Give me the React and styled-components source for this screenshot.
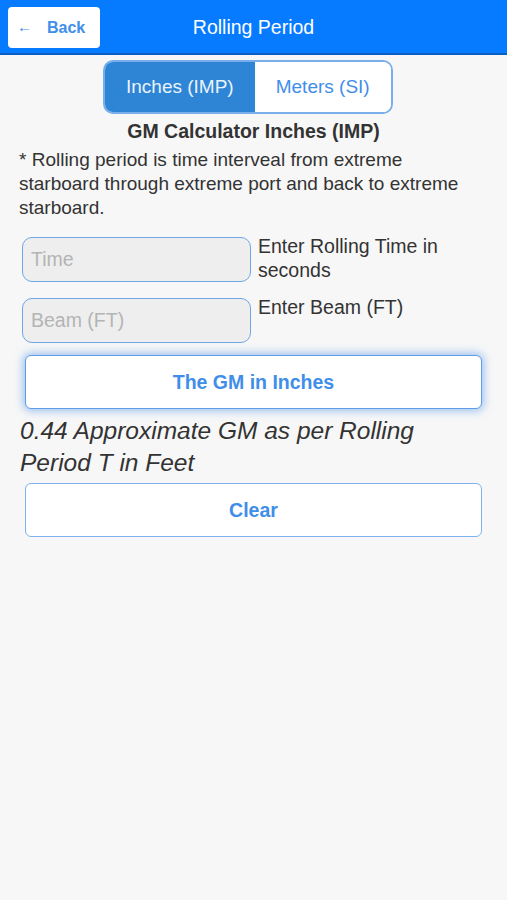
import { useState } from 'react';
import styled, { createGlobalStyle } from 'styled-components';

const GlobalStyle = createGlobalStyle`
  html, body {
    margin: 0;
    padding: 0;
    background: #f7f7f7;
    font-family: 'Liberation Sans', Arial, sans-serif;
  }
  * { box-sizing: border-box; }
`;

const App = () => {
  const [unit, setUnit] = useState('imp');
  const [time, setTime] = useState('');
  const [beam, setBeam] = useState('');

  return (
    <>
      <GlobalStyle />
      <Page>
        <Header>
          <BackButton>
            <Arrow>←</Arrow>
            Back
          </BackButton>
          <Title>Rolling Period</Title>
        </Header>

        <Content>
          <Segmented>
            <Segment active={unit === 'imp'} onClick={() => setUnit('imp')}>
              Inches (IMP)
            </Segment>
            <Segment active={unit === 'si'} onClick={() => setUnit('si')}>
              Meters (SI)
            </Segment>
          </Segmented>

          <Heading>GM Calculator Inches (IMP)</Heading>
          <Note>
            * Rolling period is time interveal from extreme starboard through
            extreme port and back to extreme starboard.
          </Note>

          <FieldRow>
            <Input
              placeholder="Time"
              value={time}
              onChange={(e) => setTime(e.target.value)}
            />
            <FieldLabel>Enter Rolling Time in seconds</FieldLabel>
          </FieldRow>
          <FieldRow>
            <Input
              placeholder="Beam (FT)"
              value={beam}
              onChange={(e) => setBeam(e.target.value)}
            />
            <FieldLabel>Enter Beam (FT)</FieldLabel>
          </FieldRow>

          <ActionButton glow>The GM in Inches</ActionButton>
          <Result>0.44 Approximate GM as per Rolling Period T in Feet</Result>
          <ActionButton>Clear</ActionButton>
        </Content>
      </Page>
    </>
  );
};

export default App;

const Page = styled.div`
  min-height: 900px;
  background: #f7f7f7;
`;

const Header = styled.div`
  position: relative;
  height: 55px;
  background: #077bff;
  border-bottom: 2px solid #0a5ec4;
  display: flex;
  align-items: center;
  justify-content: center;
`;

const BackButton = styled.button`
  position: absolute;
  left: 8px;
  top: 7px;
  width: 92px;
  height: 41px;
  border: none;
  border-radius: 4px;
  background: #ffffff;
  color: #3f8ee9;
  font-family: 'Liberation Sans', Arial, sans-serif;
  font-size: 16px;
  font-weight: bold;
  display: flex;
  align-items: center;
  padding: 0 0 0 9px;
  cursor: pointer;
`;

const Arrow = styled.span`
  font-weight: normal;
  font-size: 15px;
  line-height: 1;
  margin-right: 15px;
  margin-top: -2px;
`;

const Title = styled.h1`
  margin: 0;
  color: #ffffff;
  font-size: 19.5px;
  font-weight: normal;
  padding-top: 2px;
`;

const Content = styled.div`
  display: flex;
  flex-direction: column;
  padding: 5px 20px 0 20px;
`;

const Segmented = styled.div`
  align-self: flex-start;
  margin-left: 83px;
  display: flex;
  height: 54px;
  border: 2px solid #78aeec;
  border-radius: 10px;
  overflow: hidden;
  background: #ffffff;
`;

const Segment = styled.button`
  border: none;
  background: ${(p) => (p.active ? '#2f85d5' : '#ffffff')};
  color: ${(p) => (p.active ? '#eaf3fc' : '#3f8ee9')};
  font-family: 'Liberation Sans', Arial, sans-serif;
  font-size: 19px;
  cursor: pointer;
  padding: 0 21px;
`;

const Heading = styled.h2`
  margin: 6px 0 0 0;
  text-align: center;
  font-size: 19.5px;
  font-weight: bold;
  color: #333333;
`;

const Note = styled.p`
  margin: 5px 0 0 -1px;
  font-size: 19px;
  line-height: 24px;
  color: #333333;
`;

const FieldRow = styled.div`
  display: flex;
  align-items: flex-start;
  gap: 7px;
  margin-top: 17px;
  padding-left: 2px;

  & + & {
    margin-top: 16px;
  }
`;

const Input = styled.input`
  width: 229px;
  height: 45px;
  flex-shrink: 0;
  border: 1.5px solid #6ca7ea;
  border-radius: 10px;
  background: #eeeeee;
  font-family: 'Liberation Sans', Arial, sans-serif;
  font-size: 19.5px;
  color: #333333;
  padding: 0 8px;
  outline: none;

  &::placeholder {
    color: #b4b4b4;
  }
`;

const FieldLabel = styled.span`
  font-size: 19.5px;
  line-height: 24px;
  color: #333333;
  margin-top: -3px;
`;

const ActionButton = styled.button`
  margin: ${(p) => (p.glow ? '12px 5px 0 5px' : '4px 5px 0 5px')};
  height: 54px;
  background: #ffffff;
  border: 1.5px solid ${(p) => (p.glow ? '#5f9de8' : '#7db2ee')};
  border-radius: 6px;
  box-shadow: ${(p) => (p.glow ? '0 0 8px 2px rgba(80, 150, 235, 0.55)' : 'none')};
  color: #3f8ee9;
  font-family: 'Liberation Sans', Arial, sans-serif;
  font-size: 19.5px;
  font-weight: bold;
  cursor: pointer;
`;

const Result = styled.p`
  margin: 6px 0 0 0;
  font-size: 24.5px;
  line-height: 32px;
  font-style: italic;
  color: #333333;
`;
